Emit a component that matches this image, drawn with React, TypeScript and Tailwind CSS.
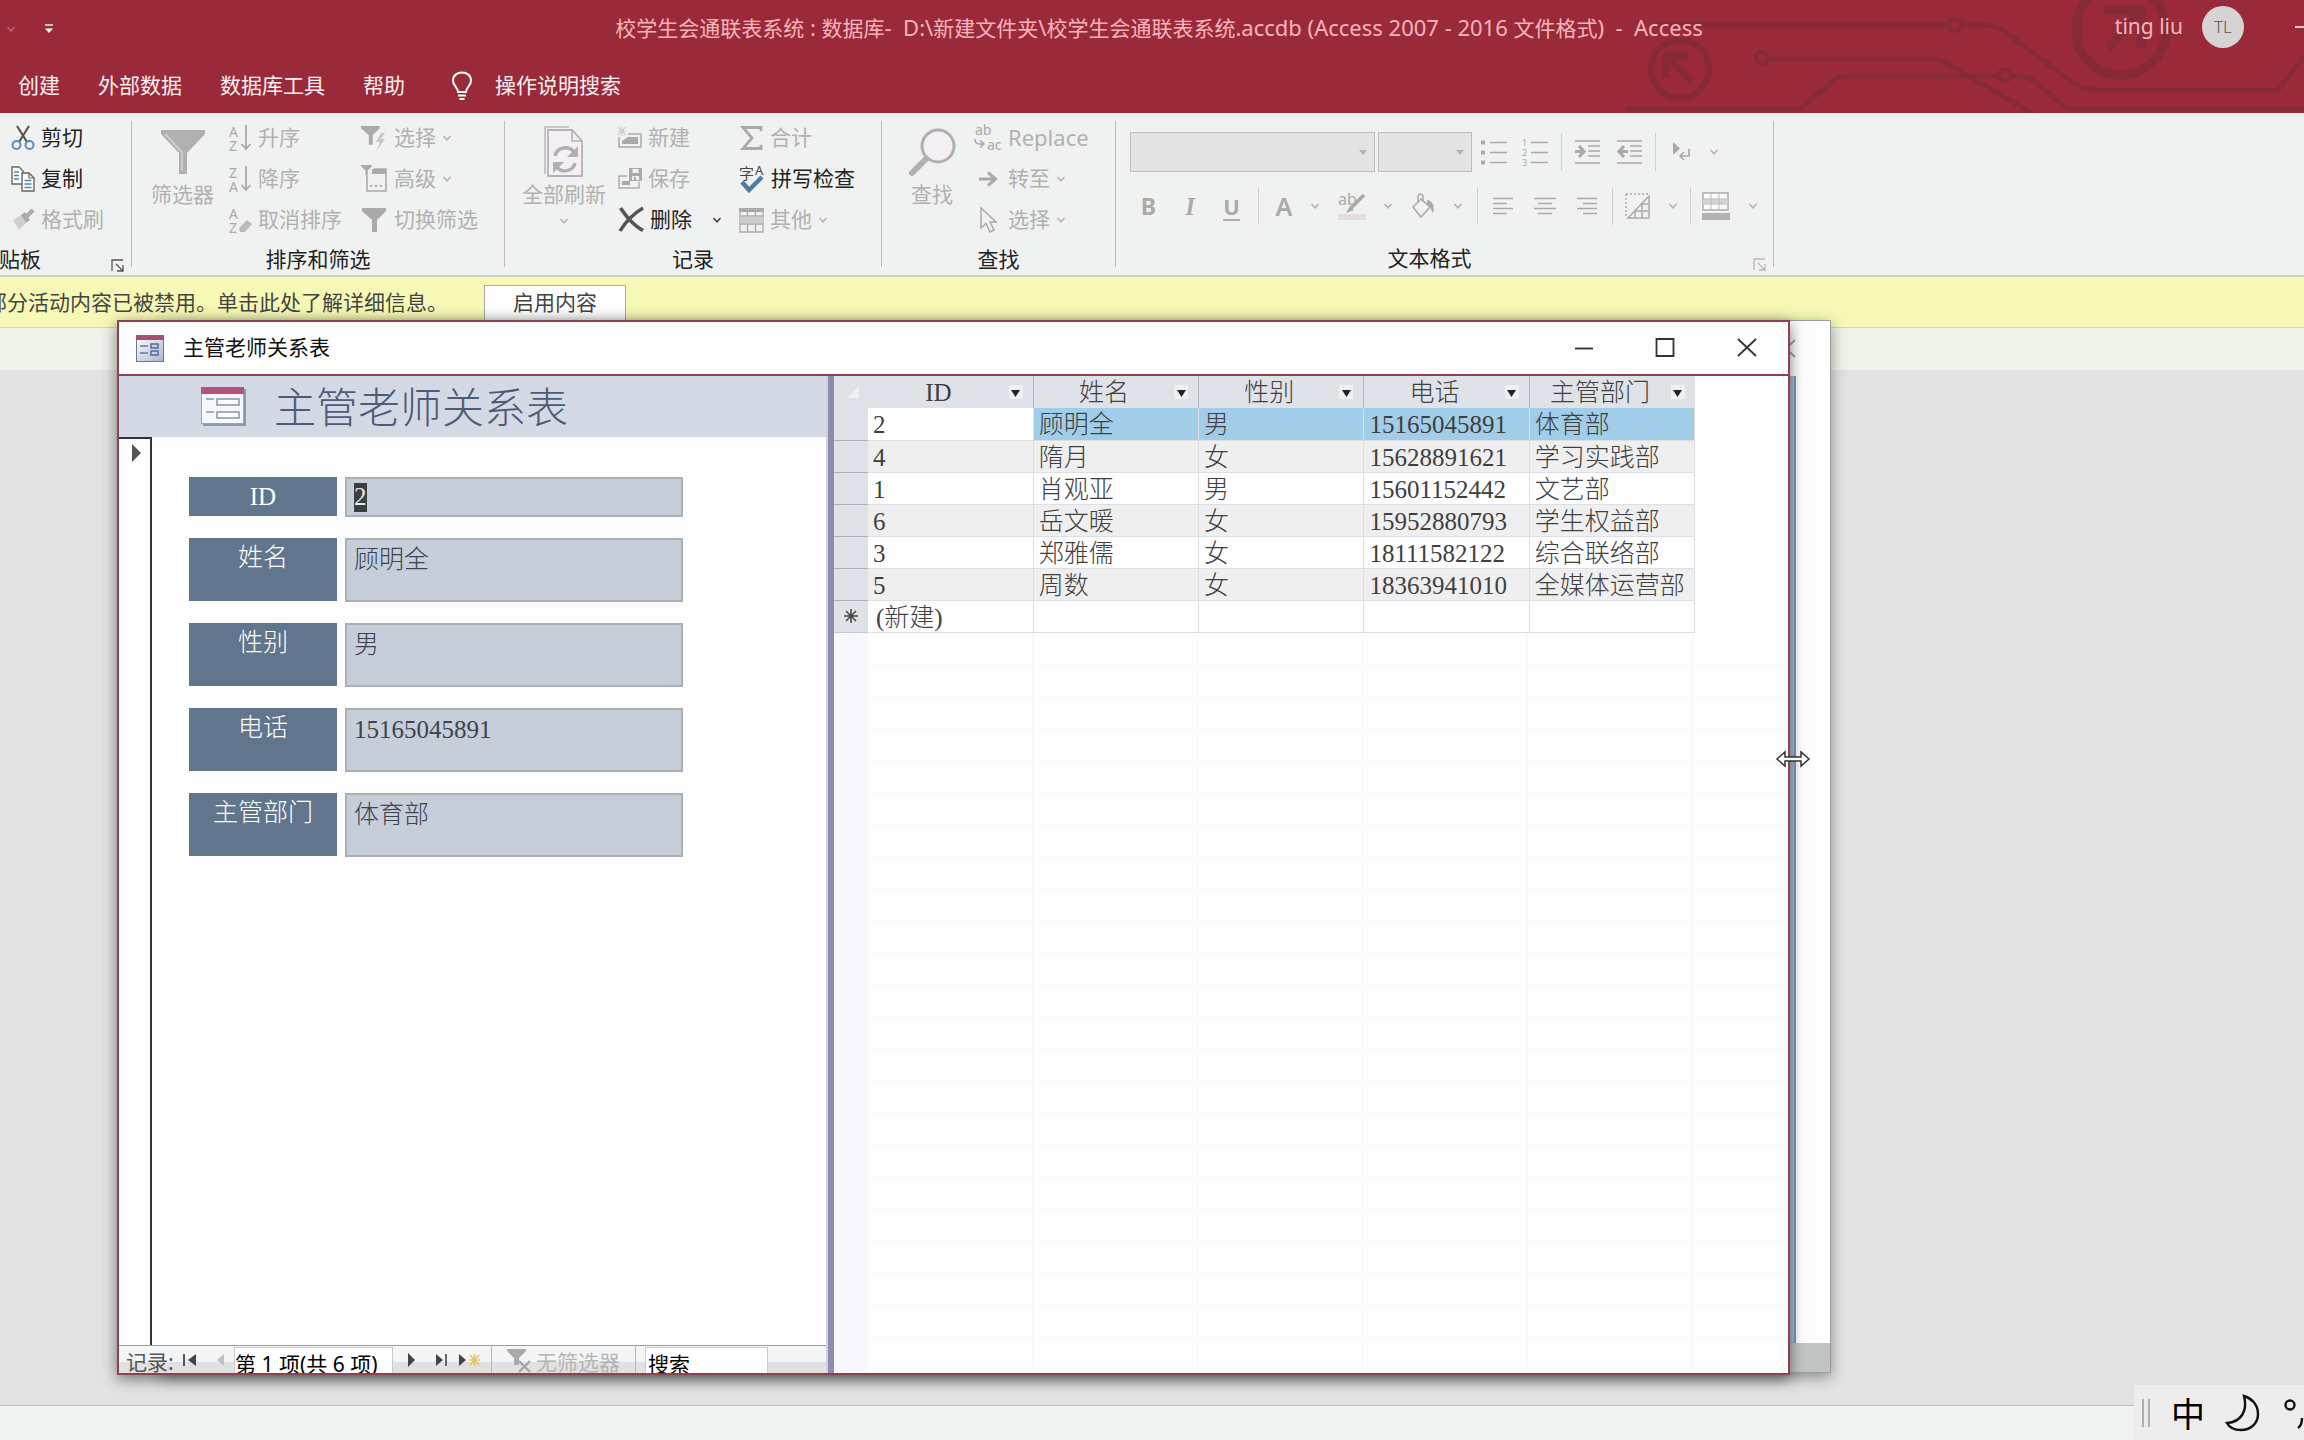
import React, { type ReactNode } from "react";

const UI = "font-['Noto_Sans','Noto_Sans_CJK_SC',sans-serif]";
const SONG = "font-['Liberation_Serif','Noto_Sans_CJK_SC',serif]";

/* ---------- small shared glyphs ---------- */

function Svg({ w, h, children, className = "" }: { w: number; h: number; children: ReactNode; className?: string }) {
  return (
    <svg width={w} height={h} viewBox={`0 0 ${w} ${h}`} fill="none" className={`shrink-0 overflow-visible ${className}`} aria-hidden="true">
      {children}
    </svg>
  );
}

function Chevron({ dark = false }: { dark?: boolean }) {
  return (
    <Svg w={10} h={8}>
      <path d="M1.5 2 L5 5.8 L8.5 2" stroke={dark ? "#444" : "#b4b4b4"} strokeWidth="1.6" />
    </Svg>
  );
}

function Launcher({ dark = false }: { dark?: boolean }) {
  return (
    <Svg w={14} h={13}>
      <path d="M1 12V1H12M5 5L12 12M12 6V12H6" stroke={dark ? "#555" : "#b8b8b8"} strokeWidth="1.3" />
    </Svg>
  );
}

/* ---------- ribbon icons ---------- */

const G = "#aaaaaa";

const ScissorsIcon = () => (
  <Svg w={24} h={26}>
    <path d="M6 1L16 17M18 1L8 17" stroke="#555" strokeWidth="2.2" />
    <circle cx="5.5" cy="20" r="4" stroke="#5b8cb8" strokeWidth="2" />
    <circle cx="18.5" cy="20" r="4" stroke="#5b8cb8" strokeWidth="2" />
  </Svg>
);
const CopyIcon = () => (
  <Svg w={24} h={26}>
    <path d="M1 1H8L12 5V18H1Z" fill="#fff" stroke="#666" strokeWidth="1.4" />
    <path d="M3 6H8M3 9.5H8M3 13H8" stroke="#4d88a8" strokeWidth="1.4" />
    <path d="M11 7H18L23 12V25H11Z" fill="#fff" stroke="#666" strokeWidth="1.4" />
    <path d="M18 7V12H23" stroke="#666" strokeWidth="1.2" />
    <path d="M13.5 14.5H20.5M13.5 18H20.5M13.5 21.5H20.5" stroke="#4d88a8" strokeWidth="1.4" />
  </Svg>
);
const BrushIcon = () => (
  <Svg w={24} h={24}>
    <path d="M2 12L10 7L15 15L8 22Z" fill="#cfcfcf" />
    <path d="M10 7L14 4L19 12L15 15Z" fill={G} />
    <path d="M16 8L22 2" stroke={G} strokeWidth="4.5" />
  </Svg>
);
const BigFunnelIcon = () => (
  <Svg w={46} h={46}>
    <path d="M1 1H45V5L27 24V45H19V24L1 5Z" fill="#b0b0b0" />
    <path d="M5 5L22 23V42" stroke="#cdcdcd" strokeWidth="2" />
  </Svg>
);
const Funnel = ({ x = 0, y = 0, s = 1 }: { x?: number; y?: number; s?: number }) => (
  <path transform={`translate(${x} ${y}) scale(${s})`} d="M0 0H24V3L15 12V24H10V12L0 3Z" fill={G} />
);
const SortIcon = ({ top, bottom, erase = false }: { top: string; bottom: string; erase?: boolean }) => (
  <Svg w={24} h={28}>
    <text x="1" y="13" fontSize="14" fill={G} fontFamily="Noto Sans">{top}</text>
    <text x="1" y="27" fontSize="14" fill={G} fontFamily="Noto Sans">{bottom}</text>
    {erase ? (
      <path d="M11 22L19 14L24 18L17 26H12Z" fill="#bcbcbc" />
    ) : (
      <path d="M18 1V25M13.5 20L18 25L22.5 20" stroke={G} strokeWidth="1.8" />
    )}
  </Svg>
);
const FilterBoltIcon = () => (
  <Svg w={27} h={26}>
    <Funnel s={0.78} y={1} />
    <path d="M20 8L15 17H19L16 25L24 14H20L24 8Z" fill="#c9c9c9" />
  </Svg>
);
const FilterAdvIcon = () => (
  <Svg w={27} h={28}>
    <Funnel s={0.45} />
    <path d="M6 11V26H25V4H13" stroke={G} strokeWidth="1.6" />
    <path d="M11 4H25V9H11Z" fill={G} />
    <path d="M9 21h2M14 21h2M19 21h2" stroke={G} strokeWidth="2" />
  </Svg>
);
const FilterIcon = () => (
  <Svg w={27} h={26}>
    <Funnel x={1} y={1} />
  </Svg>
);
const RefreshAllIcon = () => (
  <Svg w={40} h={52}>
    <path d="M1 48V1H25" stroke="#bbb" strokeWidth="1.6" />
    <path d="M4 4H28L38 15V50H4Z" fill="#f5f0f5" stroke="#b8b0b8" strokeWidth="1.8" />
    <path d="M28 4V15H38" stroke="#b8b0b8" strokeWidth="1.6" />
    <path d="M11 30C13 21 25 19 30 26M31 37C29 46 17 47 13 41" stroke="#b0b0b0" strokeWidth="3.4" />
    <path d="M34 20V31H23ZM9 47V36H20Z" fill="#b0b0b0" />
  </Svg>
);
const NewRecordIcon = () => (
  <Svg w={24} h={22}>
    <path d="M10 7H23V20H1V10" stroke={G} strokeWidth="1.5" />
    <path d="M4 14L10 10H20V17H4Z" fill={G} />
    <path d="M0 0L8 8M8 0L0 8M4 0V9M0 4H8" stroke="#cfcfcf" strokeWidth="1.2" />
  </Svg>
);
const SaveRecordIcon = () => (
  <Svg w={24} h={24}>
    <path d="M9 9H1V21H21V15" stroke={G} strokeWidth="1.5" />
    <path d="M4 14H12V18H4Z" fill={G} />
    <path d="M11 1H24V14H11Z" fill={G} />
    <path d="M14.500 2H20.500V6H14.500ZM14 9H21V13H14Z" fill="#f0f2f1" />
    <path d="M16 10H18V13H16Z" fill={G} />
  </Svg>
);
const DeleteIcon = () => (
  <Svg w={26} h={26}>
    <path d="M1 2L4 0C10 9 17 17 26 22L24 25C14 19 7 11 1 2Z" fill="#555" />
    <path d="M25 1C15 7 8 14 2 24" stroke="#555" strokeWidth="3.4" />
  </Svg>
);
const SigmaIcon = () => (
  <Svg w={25} h={26}>
    <path d="M22 6V2.500H4L13 13L4 23.500H22V20" stroke={G} strokeWidth="2.800" />
  </Svg>
);
const SpellIcon = () => (
  <Svg w={26} h={30}>
    <text x="0" y="15" fontSize="15" fill="#444" fontFamily="Noto Sans CJK SC">字</text>
    <text x="16" y="11" fontSize="13" fill="#444" fontFamily="Noto Sans">A</text>
    <path d="M3 18L10 26L23 13" stroke="#4f7ea3" strokeWidth="4.5" />
  </Svg>
);
const MoreIcon = () => (
  <Svg w={25} h={26}>
    <path d="M1 2H24V25H1ZM1 9H24M1 17H24M8.500 5V9M16.500 5V9M8.500 17V25M16.500 17V25" stroke={G} strokeWidth="1.3" />
    <path d="M0 1H25V5H0Z" fill={G} />
    <path d="M1 10H24V16H1Z" fill="#cdcdcd" />
  </Svg>
);
const MagnifierIcon = () => (
  <Svg w={48} h={49}>
    <path d="M4 45L19 30" stroke="#b0b0b0" strokeWidth="6" strokeLinecap="round" />
    <circle cx="30" cy="18" r="16" fill="#f5f0f5" stroke="#b0b0b0" strokeWidth="3" />
  </Svg>
);
const ReplaceIcon = () => (
  <Svg w={28} h={28}>
    <text x="1" y="11" fontSize="14" fill={G} fontFamily="Noto Sans">ab</text>
    <text x="13" y="26" fontSize="14" fill={G} fontFamily="Noto Sans">ac</text>
    <path d="M1 15C1 20 3 20 9 20M6 16.500L10 20L6 23.500" stroke={G} strokeWidth="1.500" />
  </Svg>
);
const GotoIcon = () => (
  <Svg w={28} h={20}>
    <path d="M5 10H22M14 3.500L21.500 10L14 16.500" stroke={G} strokeWidth="3" />
  </Svg>
);
const PointerIcon = () => (
  <Svg w={28} h={28}>
    <path d="M7 2V22L12 17.500L16 26L20 24L16 16H22Z" stroke={G} strokeWidth="1.500" />
  </Svg>
);
const BulletsIcon = ({ numbered = false }: { numbered?: boolean }) => (
  <Svg w={27} h={28}>
    <path d="M9 4.500H26M9 14.500H26M9 24.500H26" stroke={G} strokeWidth="1.600" />
    {numbered ? (
      <g fill={G} fontSize="9" fontFamily="Noto Sans">
        <text x="0" y="8">1</text>
        <text x="0" y="18">2</text>
        <text x="0" y="28">3</text>
      </g>
    ) : (
      <path d="M0 2.500h4v4h-4zM0 12.500h4v4h-4zM0 22.500h4v4h-4z" fill={G} />
    )}
  </Svg>
);
const IndentIcon = ({ out = false }: { out?: boolean }) => (
  <Svg w={27} h={26}>
    <path d="M1 2H26M14 7H26M14 12H26M14 17H26M1 24H26" stroke={G} strokeWidth="1.600" />
    <path d={out ? "M12 12.500H3M8 7L3 12.500L8 18" : "M1 12.500H10M5 7L10 12.500L5 18"} stroke={G} strokeWidth="3.200" />
  </Svg>
);
const DirectionIcon = () => (
  <Svg w={20} h={20}>
    <path d="M1 0L8 6.500L1 13Z" fill={G} />
    <path d="M17 7V14H9M12 10L8 14L12 18" stroke={G} strokeWidth="1.700" />
  </Svg>
);
const HighlightIcon = () => (
  <Svg w={28} h={30}>
    <text x="0" y="14" fontSize="16" fill={G} fontFamily="Noto Sans">ab</text>
    <path d="M26 4L13 17" stroke={G} strokeWidth="3.500" />
    <path d="M12 15L16 19L8 22Z" fill={G} />
    <path d="M0 23H28V29H0Z" fill="#e3dde3" />
  </Svg>
);
const BucketIcon = () => (
  <Svg w={25} h={26}>
    <path d="M10 6L19 14L10 24L2 14Z" stroke={G} strokeWidth="1.600" />
    <path d="M7 10V4C7 0 12 0 12 4V9" stroke={G} strokeWidth="1.500" />
    <path d="M16 7C22 8 24 13 22 20C20 17 20 14 16 11Z" fill={G} />
  </Svg>
);
const AlignIcon = ({ d }: { d: string }) => (
  <Svg w={22} h={18}>
    <path d={d} stroke={G} strokeWidth="1.700" />
  </Svg>
);
const GridlinesIcon = () => (
  <Svg w={26} h={27}>
    <path d="M1 1H24M1 1V25" stroke={G} strokeWidth="1.500" strokeDasharray="2 2" />
    <path d="M24 3V25H3ZM10 18V25M17 11V25M17 11H24M10 18H24" stroke={G} strokeWidth="1.500" />
  </Svg>
);
const AltRowIcon = () => (
  <Svg w={30} h={28}>
    <path d="M2 1H27V18H2Z" fill="#fafafa" stroke={G} strokeWidth="1.400" />
    <path d="M2 7H27V12H2Z" fill="#d4d4d4" />
    <path d="M10 1V18M18 1V18M2 7H27M2 12H27" stroke="#bdbdbd" strokeWidth="1" />
    <path d="M1 21H29V28H1Z" fill="#b5afb5" />
  </Svg>
);

function FormIcon() {
  return (
    <Svg w={28} h={27}>
      <defs>
        <linearGradient id="formIconFace" x1="0" y1="0" x2="1" y2="1">
          <stop offset="0" stopColor="#fff" />
          <stop offset="1" stopColor="#a9b6cf" />
        </linearGradient>
      </defs>
      <rect x="0.500" y="0.500" width="27" height="26" fill="url(#formIconFace)" stroke="#6c7791" />
      <path d="M0 0H28V5H0Z" fill="#a8506f" />
      <path d="M4 11H12M4 18H12" stroke="#6c7791" strokeWidth="1.600" />
      <path d="M15 9H22V13H15ZM15 16H22V20H15Z" fill="#c5d2ea" stroke="#566a96" strokeWidth="1.500" />
    </Svg>
  );
}
function FormHeaderIcon() {
  return (
    <Svg w={46} h={40}>
      <rect x="2" y="2" width="43" height="37" fill="#8f98ab" />
      <rect x="0.500" y="0.500" width="42" height="36" fill="#f6f8fd" stroke="#9aa3b8" />
      <path d="M0 0H43V7H0Z" fill="#b4527c" />
      <path d="M5 12H13M5 25H13" stroke="#8a93a8" strokeWidth="1.600" />
      <path d="M16 12H38V18H16ZM16 25H38V31H16Z" fill="#fff" stroke="#8a93a8" strokeWidth="1.500" />
    </Svg>
  );
}

/* ---------- header ---------- */

function CircuitArt() {
  return (
    <svg className="absolute right-0 top-0" width="704" height="113" viewBox="1600 0 704 113" fill="none" aria-hidden="true">
      <g stroke="#862a37" strokeWidth="5">
        <path d="M1655 25H1947M1963 25H1985C1998 25 2002 29 2012 37L2072 82C2080 88 2086 90 2096 90H2278L2304 56" />
        <circle cx="1955" cy="25" r="6" strokeWidth="4" />
        <circle cx="1680" cy="69" r="29" strokeWidth="6" />
        <path d="M1692 82L1667 57M1666 78V56H1688" strokeWidth="7" />
        <circle cx="1762" cy="58" r="6" strokeWidth="4" />
        <path d="M1769 59H1930C1942 59 1948 64 1958 70L2032 113" />
        <path d="M1625 109H1800L1832 82C1838 77 1842 76 1850 76H1998M2012 76H2020C2030 76 2036 82 2042 88L2064 106C2068 109 2072 109 2078 109H2304" />
        <circle cx="2005" cy="75" r="6" strokeWidth="4" />
        <circle cx="2121" cy="30" r="45" strokeWidth="9" />
        <path d="M2104 10H2144M2108 48L2138 15M2141 10V48" strokeWidth="9" />
      </g>
    </svg>
  );
}

function Header() {
  return (
    <header className="relative h-[113px] shrink-0 overflow-hidden bg-[#9a2a39] text-[21px] text-[#fff1f2]">
      <CircuitArt />
      <div className="relative grid h-[54px] grid-cols-[1fr_auto_1fr] items-center">
        <div className="flex items-center gap-[28px] pl-[6px] pt-[4px]">
          <Svg w={10} h={8}>
            <path d="M1.500 2L5 6L8.500 2" stroke="#b8606c" strokeWidth="1.500" />
          </Svg>
          <button type="button" aria-label="自定义快速访问工具栏">
            <Svg w={10} h={12}>
              <path d="M1 2H9" stroke="#f6dde0" strokeWidth="1.600" />
              <path d="M1 5.500H9L5 10Z" fill="#fff" />
            </Svg>
          </button>
        </div>
        <h1 className="whitespace-pre pl-3.5 text-[22px] leading-[30px] text-[#fbb4bd]">
          <span className="text-[21px]">校学生会通联表系统</span>
          {" : "}
          <span className="text-[21px]">数据库</span>
          {"-  D:\\"}
          <span className="text-[21px]">新建文件夹</span>
          {"\\"}
          <span className="text-[21px]">校学生会通联表系统</span>
          {".accdb (Access 2007 - 2016 "}
          <span className="text-[21px]">文件格式</span>
          {")  -  Access"}
        </h1>
        <div className="flex items-center justify-end">
          <span className="text-[#fbb4bd]">ting liu</span>
          <button type="button" className="ml-[19px] flex h-[42px] w-[42px] items-center justify-center rounded-full bg-[#d6d3d2] text-[17px] font-light text-[#555]">
            TL
          </button>
          <button type="button" aria-label="最小化" className="ml-[51px] h-[2px] w-[9px] bg-[#fbc9cf]" />
        </div>
      </div>
      <nav className="relative flex h-[64px] items-center pl-[18px]">
        <div className="flex gap-[38px]">
          <button type="button">创建</button>
          <button type="button">外部数据</button>
          <button type="button">数据库工具</button>
          <button type="button">帮助</button>
        </div>
        <button type="button" className="ml-[46px] flex items-center gap-[22px]">
          <Svg w={22} h={30}>
            <path d="M7 21C7 16 2 15 2 9.500C2 4.500 6 1.500 11 1.500S20 4.500 20 9.500C20 15 15 16 15 21ZM7 24.500H15M8.500 28H13.500" stroke="#fff" strokeWidth="2" />
          </Svg>
          操作说明搜索
        </button>
      </nav>
    </header>
  );
}

/* ---------- ribbon ---------- */

function Cmd({ icon, label, on = false, chev = false, size = "text-[21px]" }: { icon: ReactNode; label: string; on?: boolean; chev?: boolean; size?: string }) {
  return (
    <button type="button" disabled={!on} className={`flex h-[41px] items-center gap-[6px] whitespace-nowrap ${size} ${on ? "text-[#222]" : "text-[#b1b1b1]"}`}>
      {icon}
      {label}
      {chev && <Chevron />}
    </button>
  );
}

function BigCmd({ icon, label, chev = false }: { icon: ReactNode; label: string; chev?: boolean }) {
  return (
    <button type="button" disabled className="flex h-[123px] flex-col items-center whitespace-nowrap pt-[8px] text-[#b1b1b1]">
      <span className="flex h-[54px] items-center">{icon}</span>
      <span className="leading-[30px]">{label}</span>
      {chev && <span className="mt-2"><Chevron /></span>}
    </button>
  );
}

function Group({ label, width, launcher, children, labelClass = "justify-center" }: { label: string; width: string; launcher?: ReactNode; children: ReactNode; labelClass?: string }) {
  return (
    <section className={`flex shrink-0 ${width}`} aria-label={label}>
      <div className="flex min-w-0 flex-1 flex-col">
        <div className="flex h-[123px]">{children}</div>
        <div className={`relative flex h-[36px] items-center whitespace-nowrap pt-[4px] text-[#222] ${labelClass}`}>
          {label}
          {launcher && <span className="absolute bottom-1 right-[6px]">{launcher}</span>}
        </div>
      </div>
      <div className="mb-2 mt-1 w-px bg-[#bcbcbc]" />
    </section>
  );
}

const Bar = () => <span className="h-[38px] w-px bg-[#d2d2d2]" />;

function Tool({ label, children, chev = false }: { label: string; children: ReactNode; chev?: boolean }) {
  return (
    <button type="button" disabled aria-label={label} className="flex items-center gap-[17px] text-[25px] leading-none text-[#aaaaaa]">
      {children}
      {chev && <Chevron />}
    </button>
  );
}

function Combo({ label, width }: { label: string; width: string }) {
  return (
    <div className={`relative h-10 ${width}`}>
      <select disabled aria-label={label} className="h-full w-full appearance-none border border-[#bdbdbd] bg-[#e4e4e4]" />
      <Svg w={8} h={5} className="absolute right-[8px] top-[18px]">
        <path d="M0 0H8L4 5Z" fill="#b4b4b4" />
      </Svg>
    </div>
  );
}

function Ribbon() {
  return (
    <div className="flex h-[164px] shrink-0 overflow-hidden border-b-2 border-[#cfd1c6] bg-[#f0f2f1] pt-[4px] text-[21px]">
      <Group label="剪贴板" width="w-[132px]" launcher={<Launcher dark />} labelClass="-ml-[22px] justify-start">
        <div className="flex flex-col items-start pl-[11px]">
          <Cmd on icon={<ScissorsIcon />} label="剪切" />
          <Cmd on icon={<CopyIcon />} label="复制" />
          <Cmd icon={<BrushIcon />} label="格式刷" />
        </div>
      </Group>
      <Group label="排序和筛选" width="w-[373px]">
        <div className="flex pl-[19px]">
          <BigCmd icon={<BigFunnelIcon />} label="筛选器" />
          <div className="ml-[14px] flex flex-col items-start">
            <Cmd icon={<SortIcon top="A" bottom="Z" />} label="升序" />
            <Cmd icon={<SortIcon top="Z" bottom="A" />} label="降序" />
            <Cmd icon={<SortIcon top="A" bottom="Z" erase />} label="取消排序" />
          </div>
          <div className="ml-[19px] flex flex-col items-start">
            <Cmd icon={<FilterBoltIcon />} label="选择" chev />
            <Cmd icon={<FilterAdvIcon />} label="高级" chev />
            <Cmd icon={<FilterIcon />} label="切换筛选" />
          </div>
        </div>
      </Group>
      <Group label="记录" width="w-[377px]">
        <div className="flex pl-[17px]">
          <BigCmd icon={<RefreshAllIcon />} label="全部刷新" chev />
          <div className="ml-[12px] flex w-[121px] flex-col items-start">
            <Cmd icon={<NewRecordIcon />} label="新建" />
            <Cmd icon={<SaveRecordIcon />} label="保存" />
            <div className="flex items-center gap-[20px]">
              <Cmd on icon={<DeleteIcon />} label="删除" />
              <button type="button" aria-label="删除选项"><Chevron dark /></button>
            </div>
          </div>
          <div className="flex flex-col items-start">
            <Cmd icon={<SigmaIcon />} label="合计" />
            <Cmd on icon={<SpellIcon />} label="拼写检查" />
            <Cmd icon={<MoreIcon />} label="其他" chev />
          </div>
        </div>
      </Group>
      <Group label="查找" width="w-[234px]">
        <div className="flex pl-[26px]">
          <BigCmd icon={<MagnifierIcon />} label="查找" />
          <div className="ml-[18px] flex flex-col items-start">
            <Cmd icon={<ReplaceIcon />} label="Replace" size="text-[22px]" />
            <Cmd icon={<GotoIcon />} label="转至" chev />
            <Cmd icon={<PointerIcon />} label="选择" chev />
          </div>
        </div>
      </Group>
      <Group label="文本格式" width="w-[658px]" launcher={<Launcher />} labelClass="justify-center pr-[30px]">
        <div className="flex flex-col gap-[15px] pl-[14px] pt-[15px]">
          <div className="flex h-10 items-center">
            <Combo label="字体" width="w-[245px]" />
            <span className="w-[3px]" />
            <Combo label="字号" width="w-[94px]" />
            <div className="flex items-center gap-[14px] pl-[9px] pr-[12px]">
              <Tool label="项目符号"><BulletsIcon /></Tool>
              <Tool label="编号"><BulletsIcon numbered /></Tool>
            </div>
            <Bar />
            <div className="flex items-center gap-[15px] px-[12px]">
              <Tool label="增加缩进"><IndentIcon /></Tool>
              <Tool label="减少缩进"><IndentIcon out /></Tool>
            </div>
            <Bar />
            <div className="pl-[16px]">
              <Tool label="文字方向" chev><DirectionIcon /></Tool>
            </div>
          </div>
          <div className="flex h-[38px] items-center pl-[10px]">
            <div className="flex items-center gap-[26px] pr-[18px]">
              <Tool label="加粗"><span className="w-[17px] text-[23px] font-bold">B</span></Tool>
              <Tool label="倾斜"><span className="w-[14px] font-['Liberation_Serif',serif] font-bold italic">I</span></Tool>
              <Tool label="下划线"><span className="w-[17px] text-[22px] font-bold underline underline-offset-4">U</span></Tool>
            </div>
            <Bar />
            <div className="flex items-center gap-[18px] pl-[16px] pr-[14px]">
              <Tool label="字体颜色" chev><span className="w-[18px] font-semibold">A</span></Tool>
              <Tool label="突出显示" chev><HighlightIcon /></Tool>
              <Tool label="背景色" chev><BucketIcon /></Tool>
            </div>
            <Bar />
            <div className="flex items-center gap-[20px] pl-[14px] pr-[14px]">
              <Tool label="左对齐"><AlignIcon d="M1 1.500H21M1 6.500H15M1 11.500H21M1 16.500H15" /></Tool>
              <Tool label="居中"><AlignIcon d="M0 1.500H22M4 6.500H18M0 11.500H22M4 16.500H18" /></Tool>
              <Tool label="右对齐"><AlignIcon d="M1 1.500H21M7 6.500H21M1 11.500H21M7 16.500H21" /></Tool>
            </div>
            <Bar />
            <div className="pl-[12px] pr-[12px]">
              <Tool label="网格线" chev><GridlinesIcon /></Tool>
            </div>
            <Bar />
            <div className="pl-[10px]">
              <Tool label="可选行颜色" chev><AltRowIcon /></Tool>
            </div>
          </div>
        </div>
      </Group>
    </div>
  );
}

function MessageBar() {
  return (
    <div className="flex h-[51px] shrink-0 overflow-hidden border-b border-[#d6d8b0] bg-[#f6f9b5] text-[21px] text-[#444]">
      <p className="-ml-[14px] w-[498px] shrink-0 whitespace-nowrap leading-[50px]">部分活动内容已被禁用。单击此处了解详细信息。</p>
      <button type="button" className="mt-[8px] h-[40px] w-[142px] border border-[#ababab] bg-[#fdfdfd] pb-1">启用内容</button>
    </div>
  );
}

/* ---------- front window ---------- */

const fields = [
  { id: "name", label: "姓名", value: "顾明全" },
  { id: "gender", label: "性别", value: "男" },
  { id: "phone", label: "电话", value: "15165045891" },
  { id: "dept", label: "主管部门", value: "体育部" },
];

function FormPane() {
  return (
    <section className="flex w-[707px] shrink-0 flex-col">
      <div className={`flex h-[61px] shrink-0 items-center gap-[27px] bg-[#d4dae5] pl-[82px] ${SONG}`}>
        <FormHeaderIcon />
        <h2 className="pt-[4px] text-[42px] font-light leading-none text-[#4f5c78]">主管老师关系表</h2>
      </div>
      <div className="flex min-h-0 flex-1">
        <div className="w-[33px] shrink-0 border-r-2 border-t-2 border-[#333] pl-[13px] pt-[5px]">
          <Svg w={10} h={18}>
            <path d="M0 0L9 9L0 18Z" fill="#555" />
          </Svg>
        </div>
        <form className={`flex flex-col gap-[21px] pl-[37px] pt-[40px] text-[25px] ${SONG}`}>
          <div className="flex gap-[8px]">
            <label htmlFor="f-id" className="flex h-[40px] w-[148px] items-center justify-center border-b border-white bg-[#61768c] text-white">ID</label>
            <div className="flex h-[40px] w-[338px] items-center border-2 border-[#abb0b5] bg-[#c5ced9] pl-[7px]">
              <input id="f-id" defaultValue="2" className="h-[29px] w-[13px] bg-[#3a3f42] text-[#e8e8e8] outline-none" />
            </div>
          </div>
          {fields.map((f) => (
            <div key={f.id} className="flex gap-[8px]">
              <label htmlFor={`f-${f.id}`} className="h-[64px] w-[148px] border-b border-white bg-[#61768c] pt-[3px] text-center font-light leading-[34px] text-white">
                {f.label}
              </label>
              <textarea
                id={`f-${f.id}`}
                defaultValue={f.value}
                className="block h-[64px] w-[338px] resize-none overflow-hidden border-2 border-[#abb0b5] bg-[#c5ced9] pl-[7px] pt-[3px] font-light leading-[34px] text-[#3c4450] outline-none"
              />
            </div>
          ))}
        </form>
      </div>
      <RecordNav />
    </section>
  );
}

function RecordNav() {
  return (
    <div className="flex h-[28px] shrink-0 items-center overflow-hidden whitespace-nowrap border-t border-[#9aa0a6] bg-linear-to-b from-[#f3f5f6] from-60% to-[#e0e2e2] to-60% text-[21px] leading-[28px] text-[#555]">
      <span className="w-[64px] pl-[7px] pt-[4px]">记录:</span>
      <button type="button" aria-label="第一条记录" className="w-[33px]">
        <Svg w={16} h={14}><path d="M1 1V13" stroke="#444" strokeWidth="1.800" /><path d="M13 1V13L5 7Z" fill="#444" /></Svg>
      </button>
      <button type="button" aria-label="上一条记录" disabled className="w-[18px]">
        <Svg w={10} h={14}><path d="M8 1V13L1 7Z" fill="#c0c0c0" /></Svg>
      </button>
      <input aria-label="当前记录" defaultValue="第 1 项(共 6 项)" className="mt-[4px] h-[29px] w-[159px] border border-[#c9cdd0] bg-white pt-[2px] text-black outline-none" />
      <button type="button" aria-label="下一条记录" className="ml-[14px] w-[28px]">
        <Svg w={10} h={14}><path d="M1 0V14L8 7Z" fill="#444" /></Svg>
      </button>
      <button type="button" aria-label="最后一条记录" className="w-[23px]">
        <Svg w={14} h={14}><path d="M1 1V13L8 7Z" fill="#444" /><path d="M11 1V13" stroke="#444" strokeWidth="1.600" /></Svg>
      </button>
      <button type="button" aria-label="新记录" className="w-[33px]">
        <Svg w={24} h={14}>
          <path d="M1 1V13L8 7Z" fill="#444" />
          <path d="M12 2L21 12M21 2L12 12M16.500 1V13M11 7H22" stroke="#e3c568" strokeWidth="1.600" />
        </Svg>
      </button>
      <span className="h-full w-px bg-[#b5b9bd]" />
      <button type="button" disabled className="flex h-full w-[143px] items-center gap-[6px] pl-[14px] pt-[2px] text-[#b4b4b4]">
        <Svg w={24} h={26}>
          <path d="M1 1H20V3L13 10V17H8V10L1 3Z" fill={G} />
          <path d="M13 13L24 24M24 13L13 24" stroke="#a5a5a5" strokeWidth="2.400" />
        </Svg>
        <span className="pt-[2px]">无筛选器</span>
      </button>
      <span className="h-full w-px bg-[#b5b9bd]" />
      <input aria-label="搜索" defaultValue="搜索" className="ml-[9px] mt-[4px] h-[29px] w-[123px] border border-[#c9cdd0] bg-white pl-[2px] pt-[2px] text-black outline-none" />
    </div>
  );
}

const columns = ["ID", "姓名", "性别", "电话", "主管部门"];
const rows = [
  ["2", "顾明全", "男", "15165045891", "体育部"],
  ["4", "隋月", "女", "15628891621", "学习实践部"],
  ["1", "肖观亚", "男", "15601152442", "文艺部"],
  ["6", "岳文暖", "女", "15952880793", "学生权益部"],
  ["3", "郑雅儒", "女", "18111582122", "综合联络部"],
  ["5", "周数", "女", "18363941010", "全媒体运营部"],
];

function rowTone(r: number, c: number) {
  if (r === 0) return c === 0 ? "bg-white" : "bg-[#a2cde9]";
  return r % 2 ? "bg-[#efefef]" : "bg-[#fdfdfd]";
}

function Datasheet() {
  return (
    <section className="flex min-w-0 flex-1 flex-col overflow-hidden bg-[#fdfdfe]">
      <table className={`w-[861px] shrink-0 table-fixed border-collapse text-[25px] leading-[29px] text-[#3f3f3f] ${SONG}`}>
        <colgroup>
          <col className="w-[34px]" />
          <col />
          <col />
          <col />
          <col />
          <col />
        </colgroup>
        <thead>
          <tr className="h-[32px] bg-[#dfe2e7]">
            <th className="p-0" aria-label="全选">
              <Svg w={14} h={14} className="ml-3"><path d="M13 1V13H1Z" fill="#eef0f3" /></Svg>
            </th>
            {columns.map((c, i) => (
              <th key={c} className={`p-0 font-light ${i < 4 ? "border-r border-[#b3b8c1]" : ""}`}>
                <div className="flex h-[31px] items-center">
                  <span className="flex-1 text-center">{c}</span>
                  <button type="button" aria-label={`${c} 筛选`} className="mr-[10px] flex h-[14px] w-[14px] items-end justify-center bg-[#eef0f2] pb-[2px]">
                    <Svg w={9} h={7}><path d="M0 0H9L4.500 7Z" fill="#222" /></Svg>
                  </button>
                </div>
              </th>
            ))}
          </tr>
        </thead>
        <tbody>
          {rows.map((row, r) => (
            <tr key={row[0]} className="h-[32px]">
              <td className="border-b border-[#aab0b8] bg-[#dfe2e7] p-0" />
              {row.map((v, c) => (
                <td key={c} className={`whitespace-nowrap border-b border-r border-[#dcdfe3] p-0 pl-[5px] pt-[2px] font-light ${rowTone(r, c)}`}>
                  {v}
                </td>
              ))}
            </tr>
          ))}
          <tr className="h-[32px]">
            <td className="border-b border-[#c5c9cf] bg-[#dfe2e7] p-0 pl-[9px]">
              <Svg w={16} h={16}><path d="M8 1V15M1 8H15M3 3L13 13M13 3L3 13" stroke="#444" strokeWidth="1.500" /></Svg>
            </td>
            <td className="border-b border-r border-[#dcdfe3] p-0 pl-[8px] pt-[2px] font-light">(新建)</td>
            {[1, 2, 3, 4].map((k) => (
              <td key={k} className="border-b border-r border-[#dcdfe3] p-0" />
            ))}
          </tr>
        </tbody>
      </table>
      <div className="flex min-h-0 flex-1">
        <div className="w-[34px] bg-[#f7f7fd]" />
        <div className="flex-1 bg-[linear-gradient(to_bottom,transparent_31px,#f8f9fb_31px),linear-gradient(to_right,transparent_164px,#f6f7f9_164px)] bg-[size:100%_32px,165px_100%]" />
      </div>
    </section>
  );
}

function FrontWindow() {
  return (
    <div className="absolute bottom-[65px] left-[117px] right-[514px] top-[320px] flex flex-col border-2 border-[#91404e] bg-[#fdfdfd] shadow-[0_4px_14px_rgba(0,0,0,0.5)]">
      <div className="flex h-[54px] shrink-0 items-center border-b-2 border-[#91404e] pl-[17px] text-[21px] text-[#111]">
        <FormIcon />
        <span className="ml-[19px] flex-1">主管老师关系表</span>
        <button type="button" aria-label="最小化窗口" className="flex w-[81px] justify-center">
          <Svg w={20} h={20}><path d="M1 10.500H19" stroke="#333" strokeWidth="1.800" /></Svg>
        </button>
        <button type="button" aria-label="最大化窗口" className="flex w-[81px] justify-center">
          <Svg w={20} h={20}><path d="M1.500 1H18.500V18H1.500Z" stroke="#333" strokeWidth="1.800" /></Svg>
        </button>
        <button type="button" aria-label="关闭窗口" className="flex w-[83px] justify-center">
          <Svg w={20} h={20}><path d="M1 1L19 18M19 1L1 18" stroke="#333" strokeWidth="1.800" /></Svg>
        </button>
      </div>
      <div className="flex min-h-0 flex-1">
        <FormPane />
        <div className="w-[8px] shrink-0 border-l-2 border-[#d0d0e0] bg-[#8c8cae]" />
        <Datasheet />
      </div>
    </div>
  );
}

function BackWindow() {
  return (
    <div className="absolute bottom-[67px] left-[160px] right-[473px] top-[320px] flex flex-col border border-[#9c9c9c] bg-[#fdfdfd] shadow-[0_4px_14px_rgba(0,0,0,0.4)]">
      <div className="flex h-[55px] shrink-0 items-center justify-end pr-[34px]">
        <Svg w={20} h={20}><path d="M1 1L19 18M19 1L1 18" stroke="#a0a0a0" strokeWidth="1.800" /></Svg>
      </div>
      <div className="flex flex-1 justify-end">
        <div className="mr-[34px] w-[12px] border-r-2 border-[#7f98bf] bg-[#a9bdd8]" />
      </div>
      <div className="h-[29px] shrink-0 bg-[#c0c4c2]" />
    </div>
  );
}

function ImeBar() {
  return (
    <div className="absolute bottom-0 right-0 flex h-[55px] w-[170px] items-center overflow-hidden bg-[#ededed] pl-[8px]">
      <span className="h-[28px] w-[9px] border-x-2 border-[#b0b0b0]" />
      <button type="button" className="ml-[21px] pt-[2px] text-[34px] leading-none text-black">中</button>
      <button type="button" aria-label="半角" className="ml-[20px]">
        <Svg w={34} h={38}>
          <path d="M19 2C26 4 33 10 33 20C33 30 25 36 16 36C9 36 4 33 2 29C16 28 23 17 19 2Z" stroke="#111" strokeWidth="2.400" />
        </Svg>
      </button>
      <button type="button" aria-label="标点" className="ml-[25px]">
        <Svg w={20} h={36}>
          <circle cx="6" cy="10" r="4.500" stroke="#111" strokeWidth="2.400" />
          <path d="M18 23C18 28 17 31 14 33" stroke="#111" strokeWidth="2.400" />
        </Svg>
      </button>
    </div>
  );
}

export default function App() {
  return (
    <div className={`relative flex h-screen flex-col overflow-hidden bg-[#e3e3e3] ${UI}`}>
      <Header />
      <Ribbon />
      <MessageBar />
      <div className="h-[42px] shrink-0 bg-[#eff1eb]" />
      <main className="flex-1" />
      <footer className="h-[35px] shrink-0 border-t border-[#bdbdbd] bg-[#f0f3f1]" />
      <BackWindow />
      <FrontWindow />
      <Svg w={34} h={16} className="absolute right-[494px] top-[751px]">
        <path d="M1 8L9 1V6H25V1L33 8L25 15V10H9V15Z" fill="#fff" stroke="#333" strokeWidth="1.500" />
      </Svg>
      <ImeBar />
    </div>
  );
}
